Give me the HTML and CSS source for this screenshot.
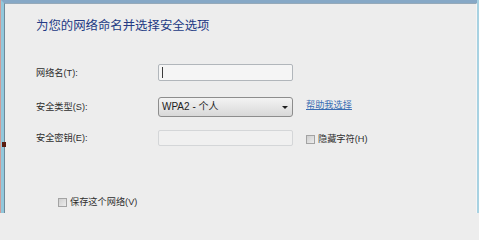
FILE: index.html
```html
<!DOCTYPE html>
<html lang="zh-CN">
<head>
<meta charset="utf-8">
<title>为您的网络命名并选择安全选项</title>
<link rel="stylesheet" href="styles.css">
</head>
<body>
<div class="window">
  <div class="mark"></div>
  <div class="chrome">
    <div class="content">
      <h1 class="title">为您的网络命名并选择安全选项</h1>
      <div class="form">
        <div class="row row-name">
          <span class="label">网络名(T):</span>
          <div class="textbox"><span class="caret"></span></div>
        </div>
        <div class="row row-type">
          <span class="label">安全类型(S):</span>
          <div class="select"><span class="select-text">WPA2 - 个人</span><span class="arrow"></span></div>
          <a class="link" href="#">帮助我选择</a>
        </div>
        <div class="row row-key">
          <span class="label">安全密钥(E):</span>
          <div class="textbox disabled"></div>
          <label class="check"><span class="box"></span><span>隐藏字符(H)</span></label>
        </div>
      </div>
      <label class="check save"><span class="box"></span><span>保存这个网络(V)</span></label>
    </div>
  </div>
</div>
</body>
</html>
```
FILE: styles.css
```css
html, body {
  margin: 0;
  padding: 0;
  background: #ededed;
}
body {
  font-family: "Liberation Sans", "Noto Sans CJK SC", sans-serif;
  color: #2b2b2b;
}
.window {
  position: relative;
  width: 479px;
  height: 213px;
  box-sizing: border-box;
  display: flex;
  border-left: 1px solid #cf9c98;
  border-right: 2px solid #a8d2e2;
  overflow: hidden;
}
.mark {
  position: absolute;
  left: 1px;
  top: 142px;
  width: 4px;
  height: 5px;
  background: #5a1d10;
}
.chrome {
  flex: 1;
  display: flex;
  border-left: 3px solid #92c8dc;
  border-top: 3px solid #86a8c6;
}
.content {
  flex: 1;
  border-left: 1px solid #6f8898;
  border-top: 1px solid #95a9b9;
  border-right: 1px solid #f5f5f5;
  background: #ededed;
  padding: 14px 0 0 31px;
}
.title {
  margin: 0;
  font-weight: normal;
  font-size: 12.4px;
  line-height: 16px;
  height: 16px;
  color: #233a84;
}
.form {
  margin-top: 30px;
  display: flex;
  flex-direction: column;
}
.row {
  display: flex;
  align-items: center;
}
.row-name { height: 17px; }
.row-type { height: 20px; margin-top: 16px; }
.row-key { height: 16px; margin-top: 13px; }
.label {
  width: 122px;
  font-size: 9.2px;
  line-height: 12px;
  color: #2e2e2e;
}
.textbox {
  width: 135px;
  height: 17px;
  box-sizing: border-box;
  border: 1px solid #b1b6bb;
  border-radius: 2px;
  background: #f5f5f5;
  display: flex;
  align-items: center;
}
.textbox.disabled {
  height: 16px;
  border-color: #d4d6d8;
  background: #f0f0f0;
}
.caret {
  width: 1px;
  height: 11px;
  margin-left: 3px;
  background: #3a3a3a;
}
.select {
  width: 135px;
  height: 20px;
  box-sizing: border-box;
  border: 1px solid #8d8d8d;
  border-radius: 3px;
  background: linear-gradient(#f3f3f3, #e6e6e6 50%, #d8d8d8);
  display: flex;
  align-items: center;
  justify-content: space-between;
  padding: 0 4px 0 3px;
}
.select-text {
  font-size: 10px;
  line-height: 12px;
  color: #222;
}
.arrow {
  width: 0;
  height: 0;
  border-left: 3px solid transparent;
  border-right: 3px solid transparent;
  border-top: 3px solid #1e1e1e;
  margin-top: 1px;
}
.link {
  margin-left: 13px;
  margin-top: -4px;
  font-size: 9.2px;
  line-height: 12px;
  color: #3a6db3;
  text-decoration: underline;
}
.check {
  display: flex;
  align-items: center;
  font-size: 9.2px;
  line-height: 12px;
  color: #2e2e2e;
}
.row-key .check {
  margin-left: 13px;
  margin-top: 2px;
}
.box {
  width: 9px;
  height: 9px;
  box-sizing: border-box;
  border: 1px solid #a3a3a3;
  background: linear-gradient(135deg, #cfcfcf, #ececec);
  margin-right: 3px;
}
.save {
  margin-top: 50px;
  margin-left: 22px;
}
```
